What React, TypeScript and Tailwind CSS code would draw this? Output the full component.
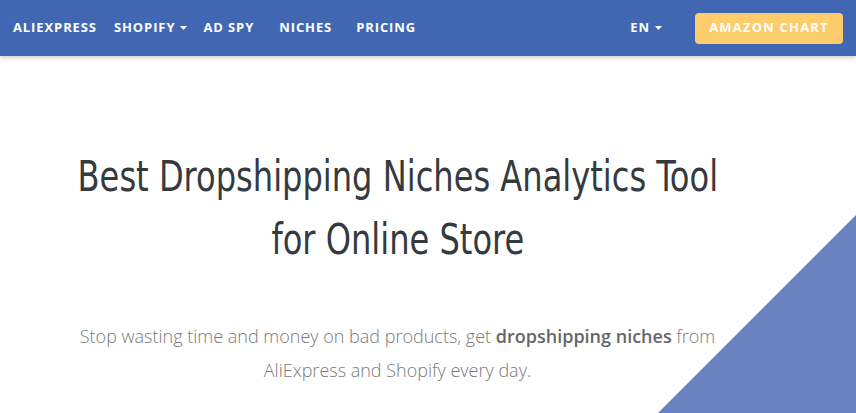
const navItems = [
  { label: 'ALIEXPRESS', caret: false, gap: '' },
  { label: 'SHOPIFY', caret: true, gap: 'ml-[17px]' },
  { label: 'AD SPY', caret: false, gap: 'ml-[16px]' },
  { label: 'NICHES', caret: false, gap: 'ml-[25px]' },
  { label: 'PRICING', caret: false, gap: 'ml-[24px]' },
];

function Caret() {
  return (
    <svg width="7" height="4" viewBox="0 0 7 4" className="ml-[5px]">
      <path d="M0 0h7L3.5 4z" fill="currentColor" />
    </svg>
  );
}

export default function App() {
  return (
    <div className="relative w-[856px] h-[413px] overflow-hidden bg-white">
      {/* top bar */}
      <header className="relative z-10 flex h-[56px] items-center bg-[#4267b2] px-[13px] shadow-[0_2px_4px_rgba(0,0,0,0.18)] font-['Open_Sans',sans-serif]">
        <nav className="flex items-center text-[13px] font-bold tracking-[0.9px] text-white">
          {navItems.map(item => (
            <a key={item.label} className={`flex items-center ${item.gap}`}>
              {item.label}
              {item.caret && <Caret />}
            </a>
          ))}
        </nav>
        <div className="ml-auto flex items-center">
          <a className="flex items-center text-[13px] font-bold tracking-[0.9px] text-white">
            EN
            <Caret />
          </a>
          <button className="ml-[33px] h-[31px] w-[148px] rounded-[4px] bg-[#ffcc6b] text-[13px] font-bold tracking-[1.2px] text-white">
            AMAZON CHART
          </button>
        </div>
      </header>

      {/* corner shape */}
      <svg className="absolute right-0 bottom-0" width="198" height="198" viewBox="0 0 198 198">
        <polygon points="198,0 198,198 0,198" fill="#6883c0" />
      </svg>

      {/* hero */}
      <section className="relative flex flex-col items-center pt-[89px] pr-[61px]">
        <h1 className="scale-x-[0.83] whitespace-nowrap text-center text-[43px] leading-[63px] text-[#343a40] font-['DejaVu_Sans_Condensed','DejaVu_Sans',sans-serif] font-extralight">
          Best Dropshipping Niches Analytics Tool
          <br />
          for Online Store
        </h1>
        <p className="mt-[48px] w-[700px] text-center text-[18px] leading-[34px] font-light text-[#7a7a7a] font-['Open_Sans',sans-serif]">
          Stop wasting time and money on bad products, get{' '}
          <b className="font-semibold text-[#666]">dropshipping niches</b> from AliExpress and Shopify every day.
        </p>
      </section>
    </div>
  );
}
